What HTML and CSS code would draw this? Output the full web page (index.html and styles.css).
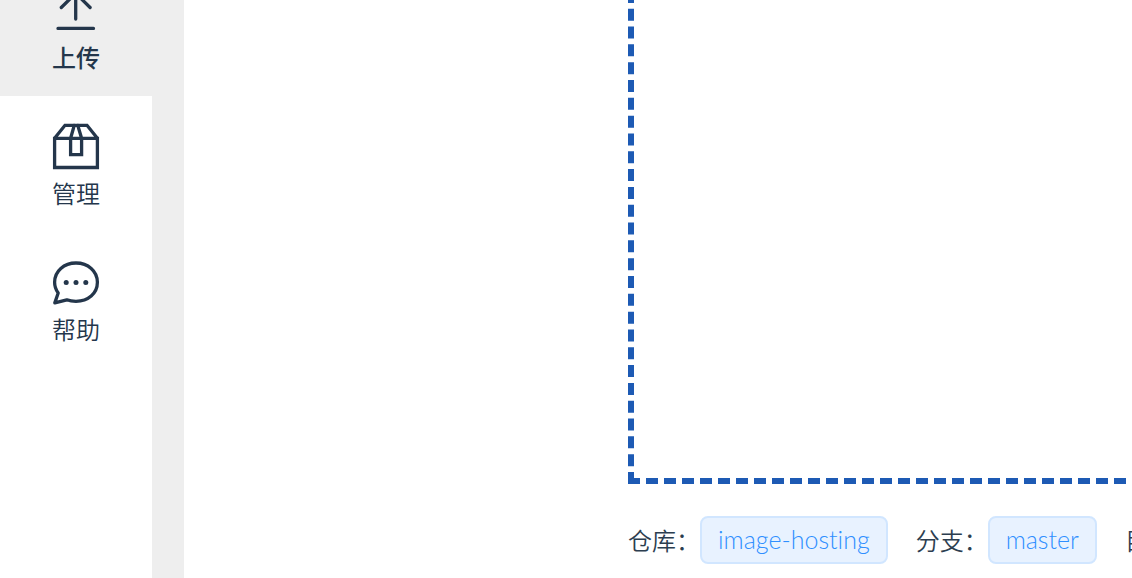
FILE: index.html
```html
<!DOCTYPE html>
<html lang="zh-CN">
<head>
<meta charset="utf-8">
<title>上传</title>
<link rel="stylesheet" href="styles.css">
</head>
<body>
<div class="app">
  <nav class="sidebar">
    <a class="nav-item active" href="#upload">
      <svg class="icon" viewBox="0 0 48 48" aria-hidden="true"><path d="M23.700 33V5M9.300 21.500L23.700 7.300l14.400 14.200M6 42.400h35.500"/></svg>
      <span class="label">上传</span>
    </a>
    <a class="nav-item" href="#manage">
      <svg class="icon square" viewBox="0 0 48 48" aria-hidden="true"><path d="M2.600 16.300h42.800v29.200H2.600zM2.600 16.300L13 3.300h22l10.400 13M22.300 3.300l-3.700 13v16.400h11V16.300l-3.900-13"/></svg>
      <span class="label">管理</span>
    </a>
    <a class="nav-item" href="#help">
      <svg class="icon" viewBox="0 0 48 48" aria-hidden="true"><path d="M2.800 44.900L6.200 35C3.800 31.800 2.600 28 2.600 24.300 2.600 13 12 5 24 5S45.400 13 45.400 24.300 36 43.300 24 43.300c-3.300 0-6.500-.5-9.200-1.500z"/><g class="dots"><circle cx="14.200" cy="24.600" r="2.500"/><circle cx="24" cy="24.600" r="2.500"/><circle cx="33.800" cy="24.600" r="2.500"/></g></svg>
      <span class="label">帮助</span>
    </a>
  </nav>
  <main class="content">
    <section class="dropzone" aria-label="上传"></section>
    <div class="info">
      <div class="field"><span>仓库：</span><span class="tag">image-hosting</span></div>
      <div class="field"><span>分支：</span><span class="tag">master</span></div>
      <div class="field"><span>目录：</span></div>
    </div>
  </main>
</div>
</body>
</html>
```
FILE: styles.css
```css
* { box-sizing: border-box; }

body {
  margin: 0;
  background: #eee;
  color: #2c3e50;
  font-family: Lato, "Noto Sans CJK SC", sans-serif;
  font-size: 24px;
  line-height: 32px;
}

.app {
  display: flex;
  gap: 32px;
  height: 100vh;
  overflow: hidden;
}

.sidebar {
  flex: none;
  width: 152px;
  background: #fff;
}

.nav-item {
  display: flex;
  flex-direction: column;
  align-items: center;
  gap: 7px;
  height: 136px;
  padding-top: 26px;
  color: #24364b;
  font-family: "Noto Sans CJK SC", sans-serif;
  font-weight: 350;
  text-decoration: none;
}

/* the list is scrolled slightly past its first entry */
.nav-item:first-child { margin-top: -40px; }

.nav-item.active {
  background: #eee;
  font-weight: 500;
}

.icon {
  flex: none;
  width: 48px;
  height: 48px;
  fill: none;
  stroke: #24364b;
  stroke-width: 3.3;
  stroke-linecap: round;
  stroke-linejoin: round;
}

.square { stroke-linejoin: miter; }

.dots {
  fill: #24364b;
  stroke: none;
}

.content {
  flex: 1;
  min-width: 0;
  padding-left: 444px;
  background: #fff;
  overflow: hidden;
}

.dropzone {
  width: 1200px;
  height: 600px;
  margin-top: -116px;
  border: 6px dashed #1d5ab4;
}

.info {
  display: flex;
  gap: 28px;
  margin-top: 32px;
  white-space: nowrap;
}

.field {
  display: flex;
  flex: none;
  align-items: center;
  font-family: "Noto Sans CJK SC", sans-serif;
  font-weight: 350;
  line-height: 30px;
}

.tag {
  padding: 6px 16px 8px;
  border: 2px solid #d1e6ff;
  border-radius: 8px;
  background: #e8f2ff;
  color: #2f8fff;
  font-family: Lato, sans-serif;
  font-size: 25px;
  font-variant-ligatures: none;
  font-weight: 300;
}
```
